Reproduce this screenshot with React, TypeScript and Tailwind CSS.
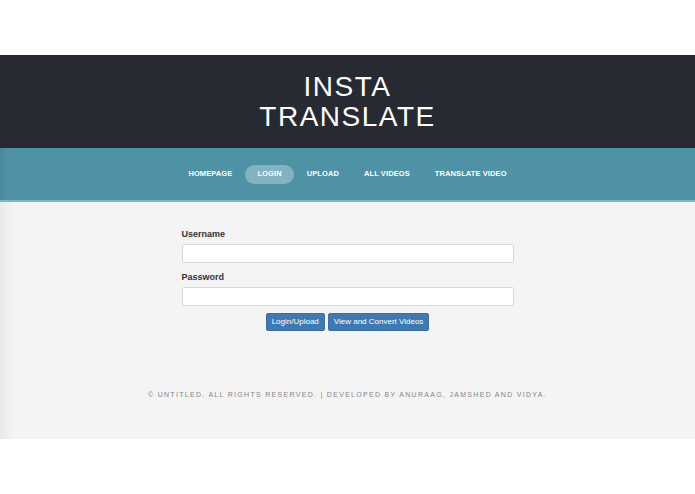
import React from "react";

export default function App() {
  const nav = ["HOMEPAGE", "LOGIN", "UPLOAD", "ALL VIDEOS", "TRANSLATE VIDEO"];
  return (
    <div className="w-[695px] h-[494px] bg-white flex flex-col" style={{ fontFamily: '"Liberation Sans", Arial, sans-serif' }}>
      <div className="h-[55px] bg-white" />
      <header className="h-[93px] bg-[#272a33] flex flex-col items-center justify-center">
        <div className="text-white text-[28px] leading-[30px] tracking-[1.5px] text-center pt-[1px]">
          INSTA
          <br />
          TRANSLATE
        </div>
      </header>
      <nav className="h-[54px] bg-[#4f91a5] border-b-2 border-[#7fb5c6] flex items-center justify-center gap-[1px] shadow-[inset_10px_0_10px_-10px_rgba(0,0,0,0.12)]">
        {nav.map((n) => (
          <span
            key={n}
            className={
              "text-white font-bold text-[7.5px] tracking-[0.1px] h-[19px] flex items-center rounded-full px-[12px] " +
              (n === "LOGIN" ? "bg-[rgba(255,255,255,0.3)]" : "")
            }
          >
            {n}
          </span>
        ))}
      </nav>
      <main className="h-[237px] bg-[#f4f4f4] flex flex-col items-center shadow-[inset_14px_0_14px_-12px_rgba(0,0,0,0.08)]">
        <form className="w-[332px] mt-[27px] flex flex-col" onSubmit={(e) => e.preventDefault()}>
          <label className="text-[9px] font-bold text-[#333] leading-[11px]">Username</label>
          <input className="mt-[4px] h-[19px] bg-white border border-[#d9d9d9] rounded-[2px]" />
          <label className="mt-[9px] text-[9px] font-bold text-[#333] leading-[11px]">Password</label>
          <input className="mt-[4px] h-[19px] bg-white border border-[#d9d9d9] rounded-[2px]" />
          <div className="mt-[7px] flex justify-center gap-[3px]">
            <button className="h-[18px] px-[5px] bg-[#3f79b3] border border-[#3a6fa5] text-white text-[8px] rounded-[2px]">Login/Upload</button>
            <button className="h-[18px] px-[5px] bg-[#3f79b3] border border-[#3a6fa5] text-white text-[8px] rounded-[2px]">View and Convert Videos</button>
          </div>
        </form>
        <p className="mt-[59px] text-[7px] tracking-[1.3px] text-[#858585] leading-[9px]">
          © UNTITLED. ALL RIGHTS RESERVED. | DEVELOPED BY ANURAAG, JAMSHED AND VIDYA.
        </p>
      </main>
      <div className="flex-1 bg-white" />
    </div>
  );
}
